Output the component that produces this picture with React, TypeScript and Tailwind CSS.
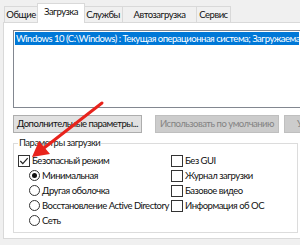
import React from "react";

const tabs = [
  { t: "Общие", w: "w-[34px]" },
  { t: "Загрузка", w: "w-[48px]" },
  { t: "Службы", w: "w-[39px]" },
  { t: "Автозагрузка", w: "w-[74px]" },
  { t: "Сервис", w: "w-[34px]" },
];

function Check({ checked }: { checked?: boolean }) {
  return (
    <span className="flex h-[12px] w-[12px] shrink-0 items-center justify-center border border-[#333] bg-white">
      {checked && (
        <svg width="10" height="10" viewBox="0 0 10 10">
          <path d="M1.3 5 L3.8 7.6 L8.7 2.2" fill="none" stroke="#222" strokeWidth="1.2" />
        </svg>
      )}
    </span>
  );
}

function Radio({ checked }: { checked?: boolean }) {
  return (
    <span className="flex h-[11px] w-[11px] shrink-0 items-center justify-center rounded-full border border-[#333] bg-white">
      {checked && <span className="h-[5px] w-[5px] rounded-full bg-[#111]" />}
    </span>
  );
}

function Opt({ kind, checked, label }: { kind: "c" | "r"; checked?: boolean; label: string }) {
  return (
    <div className="flex h-[15px] items-center gap-[2px] whitespace-nowrap">
      {kind === "c" ? <Check checked={checked} /> : <Radio checked={checked} />}
      <span>{label}</span>
    </div>
  );
}

export default function App() {
  return (
    <div
      className="relative h-[245px] w-[300px] overflow-hidden bg-[#f0f0f0] pt-[3px] text-[9.5px] leading-none tracking-[-0.5px] text-[#111]"
      style={{ fontFamily: 'Lato, "Liberation Sans", sans-serif' }}
    >
      <div className="flex h-[19px] items-end pl-[4px]">
        {tabs.map(({ t, w }, i) =>
          i === 1 ? (
            <div
              key={t}
              className={`relative z-10 -mx-[1px] mb-[-1px] flex h-[20px] items-center justify-center border border-b-0 border-[#d9d9d9] bg-white pb-[3px] ${w}`}
            >
              {t}
            </div>
          ) : (
            <div
              key={t}
              className={`flex h-[16px] items-center justify-center border border-b-0 border-l-0 border-[#d9d9d9] bg-[#f0f0f0] first:border-l ${w}`}
            >
              {t}
            </div>
          )
        )}
      </div>
      <div className="ml-[3px] h-[217px] border border-r-0 border-[#d9d9d9] bg-white pl-[9px] pt-[7px]">
        <div className="h-[78px] border border-r-0 border-[#828790] px-[1px] pt-[1px]">
          <div className="flex h-[13px] items-center whitespace-nowrap bg-[#0078d7] pl-[1px] text-white">
            Windows 10 (C:\Windows) : Текущая операционная система; Загружаемая операционная система
          </div>
        </div>
        <div className="mt-[7px] flex gap-[13px] whitespace-nowrap">
          <div className="flex h-[18px] w-[129px] shrink-0 items-center justify-center border border-[#adadad] bg-[#e1e1e1]">
            Дополнительные параметры...
          </div>
          <div className="flex h-[18px] w-[124px] shrink-0 items-center justify-center border border-[#bfbfbf] bg-[#cccccc] text-[#838383]">
            Использовать по умолчанию
          </div>
          <div className="-ml-[8px] flex h-[18px] w-[60px] shrink-0 items-center border border-[#bfbfbf] bg-[#cccccc] pl-[12px] text-[#838383]">
            Удалить
          </div>
        </div>
        <div className="relative mr-[2px] mt-[10px] h-[90px] border border-[#dcdcdc] pl-[4px] pt-[9px]">
          <span className="absolute -top-[6px] left-[4px] bg-white px-[1px] text-[#222]">Параметры загрузки</span>
          <div className="flex">
            <div className="w-[153px] shrink-0">
              <Opt kind="c" checked label="Безопасный режим" />
              <div className="pl-[11px]">
                <Opt kind="r" checked label="Минимальная" />
                <Opt kind="r" label="Другая оболочка" />
                <Opt kind="r" label="Восстановление Active Directory" />
                <Opt kind="r" label="Сеть" />
              </div>
            </div>
            <div>
              <Opt kind="c" label="Без GUI" />
              <Opt kind="c" label="Журнал загрузки" />
              <Opt kind="c" label="Базовое видео" />
              <Opt kind="c" label="Информация  об ОС" />
            </div>
          </div>
        </div>
      </div>
      <svg className="pointer-events-none absolute left-0 top-0" width="300" height="245">
        <line x1="102" y1="103" x2="44" y2="148" stroke="#e8231c" strokeWidth="3" strokeLinecap="round" />
        <polygon points="32,157 39,141 50,154" fill="#e8231c" />
      </svg>
    </div>
  );
}
